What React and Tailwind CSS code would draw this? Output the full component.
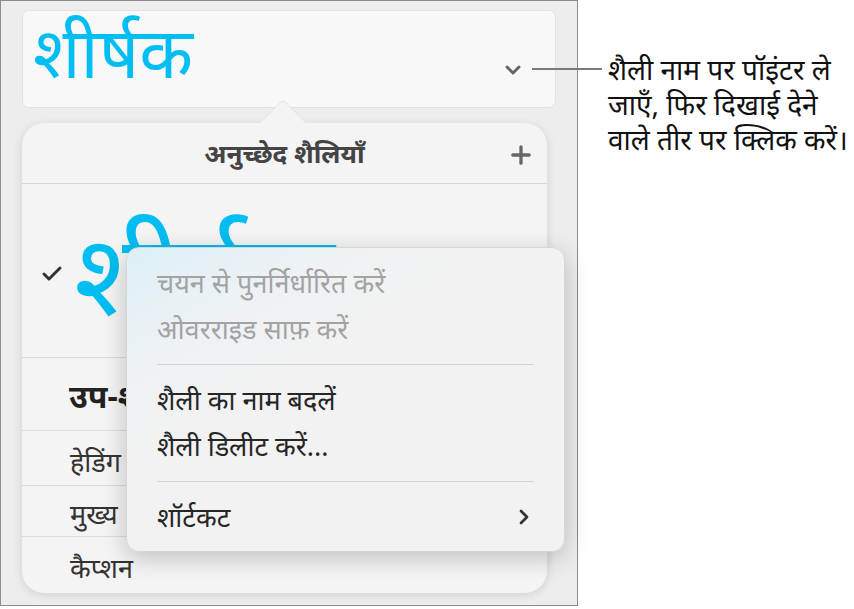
import React from 'react';
import { ChevronDown, ChevronRight, Plus, Check } from 'lucide-react';

const font = { fontFamily: '"Noto Sans", "Noto Sans Devanagari", "Lohit Devanagari", sans-serif' };

const StyleRow = ({ children, className = '', last = false }) => (
  <div className={`flex items-center ${last ? '' : 'border-b border-[#dcdcdc]'} ${className}`}>
    {children}
  </div>
);

const MenuItem = ({ children, disabled = false, arrow = false }) => (
  <div
    className={`flex items-center justify-between h-[46px] text-[27px] ${
      disabled ? 'text-[#a3a3a3]' : 'text-[#262626]'
    }`}
  >
    <span className="whitespace-nowrap">{children}</span>
    {arrow && <ChevronRight className="w-[24px] h-[24px] text-[#333] mr-[-2px]" strokeWidth={2.8} />}
  </div>
);

const Separator = () => <div className="my-[12px] h-px bg-[#d4d4d4]" />;

export default function App() {
  return (
    <div className="relative w-[854px] h-[609px] bg-white flex" style={font}>
      {/* Inspector panel */}
      <div className="w-[578px] h-[606px] border border-[#8c8c8c] bg-[#ededed] px-[21px] pt-[9px] overflow-hidden">
        {/* Current style name */}
        <div className="h-[98px] rounded-[7px] border border-[#e2e2e2] bg-[#f8f8f8] flex items-center justify-between pl-[10px] pr-[30px]">
          <span className="text-[70px] leading-none text-[#00bdf2] -mt-[16px]">शीर्षक</span>
          <ChevronDown className="w-[24px] h-[24px] text-[#666] mt-[22px]" strokeWidth={3} />
        </div>

        {/* Popover */}
        <div className="relative mt-[15px] w-[525px] h-[470px] rounded-[22px] bg-[#f4f4f4] shadow-[0_2px_10px_rgba(0,0,0,0.12)]">
          <div className="absolute -top-[17px] left-[244px] w-[34px] h-[34px] rotate-45 rounded-tl-[5px] bg-[#f4f4f4] border-l border-t border-[#e2e2e2]" />
          <div className="relative flex items-center justify-center h-[61px] border-b border-[#d8d8d8]">
            <span className="text-[26px] font-bold text-[#444]">अनुच्छेद शैलियाँ</span>
            <Plus className="absolute right-[12px] top-[18px] w-[28px] h-[28px] text-[#666]" strokeWidth={2.8} />
          </div>
          <div className="flex flex-col rounded-b-[22px] overflow-hidden">
            <StyleRow className="h-[174px] pl-[18px] overflow-hidden">
              <Check className="w-[24px] h-[24px] text-[#333] mt-[6px]" strokeWidth={3} />
              <span className="ml-[10px] text-[114px] leading-none text-[#00bdf2] whitespace-nowrap mt-[2px]">शीर्षक</span>
            </StyleRow>
            <StyleRow className="h-[73px] pl-[47px] pt-[4px] text-[32px] font-bold text-[#222] whitespace-nowrap">उप-शीर्षक</StyleRow>
            <StyleRow className="h-[55px] pl-[48px] pt-[8px] text-[27px] text-[#333]">हेडिंग</StyleRow>
            <StyleRow className="h-[51px] pl-[48px] pt-[6px] text-[27px] text-[#333]">मुख्य</StyleRow>
            <StyleRow className="h-[55px] pl-[48px] pt-[8px] text-[27px] text-[#333]" last>कैप्शन</StyleRow>
          </div>
        </div>
      </div>

      {/* Context menu */}
      <div className="absolute left-[126px] top-[247px] w-[439px] h-[305px] rounded-[13px] bg-[linear-gradient(150deg,#dcf0f8_0%,#eef2f4_22%,#f2f2f2_40%)] border border-[#d6d6d6] shadow-[0_6px_24px_rgba(0,0,0,0.22)] px-[30px] pt-[12px]">
        <MenuItem disabled>चयन से पुनर्निर्धारित करें</MenuItem>
        <MenuItem disabled>ओवरराइड साफ़ करें</MenuItem>
        <Separator />
        <MenuItem>शैली का नाम बदलें</MenuItem>
        <MenuItem>शैली डिलीट करें...</MenuItem>
        <Separator />
        <MenuItem arrow>शॉर्टकट</MenuItem>
      </div>

      {/* Callout line */}
      <div className="absolute left-[532px] top-[68px] w-[70px] h-[2px] bg-[#7a7a7a]" />

      {/* Callout text */}
      <div className="pl-[30px] pt-[52px] text-[28px] leading-[35px] text-[#111] whitespace-nowrap">
        <p>शैली नाम पर पॉइंटर ले</p>
        <p>जाएँ, फिर दिखाई देने</p>
        <p>वाले तीर पर क्लिक करें।</p>
      </div>
    </div>
  );
}
